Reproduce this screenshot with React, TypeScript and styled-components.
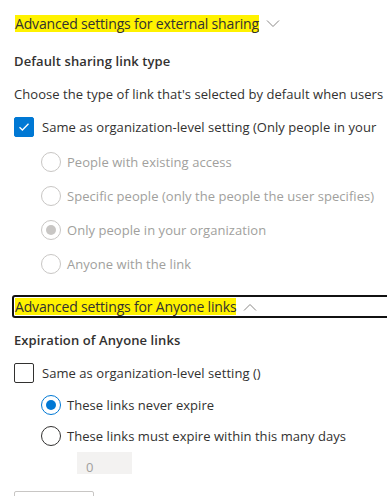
import React from "react";
import styled, { createGlobalStyle } from "styled-components";

const GlobalStyle = createGlobalStyle`
  body {
    margin: 0;
    background: #ffffff;
    font-family: "Open Sans", "Noto Sans", sans-serif;
    color: #323130;
    overflow: hidden;
  }
`;

const Page = styled.div`
  padding: 12px 0 0 14px;
  width: 387px;
  box-sizing: border-box;
`;

const SectionHeader = styled.div<{ $outlined?: boolean; $top?: number }>`
  display: flex;
  align-items: center;
  gap: 7px;
  height: 17px;
  margin-top: ${(p) => p.$top ?? 0}px;
  margin-left: -2px;
  margin-right: ${(p) => (p.$outlined ? "-20px" : "0")};
  padding: 1px 0 1px 1px;
  border: 2px solid ${(p) => (p.$outlined ? "#111" : "transparent")};
  border-radius: 3px;
`;

const Highlight = styled.span`
  background: #fff200;
  font-size: 14px;
  line-height: 17px;
  letter-spacing: -0.17px;
  color: #323130;
  white-space: nowrap;
`;

const Chevron: React.FC<{ up?: boolean }> = ({ up }) => (
  <svg width="14" height="8" viewBox="0 0 14 8">
    <path
      d={up ? "M1 7.5 L7 1.5 L13 7.5" : "M1 0.5 L7 6.5 L13 0.5"}
      fill="none"
      stroke="#8a8886"
      strokeWidth="1"
    />
  </svg>
);

const FieldLabel = styled.div<{ $top: number }>`
  margin-top: ${(p) => p.$top}px;
  font-size: 13px;
  font-weight: 600;
  line-height: 20px;
  letter-spacing: 0.1px;
`;

const Description = styled.div`
  margin-top: 13px;
  font-size: 13px;
  line-height: 20px;
  letter-spacing: 0.05px;
  white-space: nowrap;
`;

const CheckRow = styled.div<{ $top: number }>`
  display: flex;
  align-items: center;
  gap: 8px;
  margin-top: ${(p) => p.$top}px;
  height: 20px;
  font-size: 13px;
  letter-spacing: 0.05px;
  white-space: nowrap;
`;

const Box = styled.span<{ $checked?: boolean }>`
  flex: none;
  width: 20px;
  height: 20px;
  box-sizing: border-box;
  border-radius: 2px;
  border: 1px solid ${(p) => (p.$checked ? "#0078d4" : "#323130")};
  background: ${(p) => (p.$checked ? "#0078d4" : "#fff")};
  display: flex;
  align-items: center;
  justify-content: center;
`;

const RadioList = styled.div<{ $top: number; $step: number }>`
  display: flex;
  flex-direction: column;
  gap: ${(p) => p.$step - 20}px;
  margin-top: ${(p) => p.$top}px;
  padding-left: 27px;
`;

const RadioRow = styled.div<{ $disabled?: boolean }>`
  display: flex;
  align-items: center;
  gap: 6px;
  height: 20px;
  font-size: 13px;
  letter-spacing: 0.05px;
  white-space: nowrap;
  color: ${(p) => (p.$disabled ? "#a19f9d" : "#323130")};
`;

const Dot = styled.span<{ $checked?: boolean; $disabled?: boolean }>`
  flex: none;
  width: 20px;
  height: 20px;
  box-sizing: border-box;
  border-radius: 50%;
  border: 1px solid
    ${(p) => (p.$disabled ? "#c8c6c4" : p.$checked ? "#0078d4" : "#323130")};
  display: flex;
  align-items: center;
  justify-content: center;

  &::after {
    content: "";
    display: ${(p) => (p.$checked ? "block" : "none")};
    width: 10px;
    height: 10px;
    border-radius: 50%;
    background: ${(p) => (p.$disabled ? "#c8c6c4" : "#0078d4")};
  }
`;

const DaysInput = styled.div`
  margin: 6px 0 0 63px;
  width: 55px;
  height: 22px;
  box-sizing: border-box;
  background: #f3f2f1;
  color: #a19f9d;
  font-size: 13px;
  line-height: 13px;
  padding: 9px 0 0 9px;
`;

const SaveButton = styled.div`
  margin-top: 17px;
  width: 80px;
  height: 32px;
  box-sizing: border-box;
  border: 1px solid #c8c6c4;
  border-radius: 2px;
`;

const CheckMark = () => (
  <svg width="12" height="10" viewBox="0 0 12 10">
    <path d="M1.5 5.2 L4.4 8 L10.5 1.8" fill="none" stroke="#fff" strokeWidth="1.3" />
  </svg>
);

const sharingOptions = [
  { label: "People with existing access", checked: false },
  { label: "Specific people (only the people the user specifies)", checked: false },
  { label: "Only people in your organization", checked: true },
  { label: "Anyone with the link", checked: false },
];

export default function App() {
  return (
    <>
      <GlobalStyle />
      <Page>
        <SectionHeader>
          <Highlight>Advanced settings for external sharing</Highlight>
          <Chevron />
        </SectionHeader>

        <FieldLabel $top={16}>Default sharing link type</FieldLabel>
        <Description>Choose the type of link that's selected by default when users</Description>

        <CheckRow $top={13}>
          <Box $checked>
            <CheckMark />
          </Box>
          Same as organization-level setting (Only people in your
        </CheckRow>

        <RadioList $top={15} $step={34}>
          {sharingOptions.map((o) => (
            <RadioRow key={o.label} $disabled>
              <Dot $checked={o.checked} $disabled />
              {o.label}
            </RadioRow>
          ))}
        </RadioList>

        <SectionHeader $outlined $top={21}>
          <Highlight>Advanced settings for Anyone links</Highlight>
          <Chevron up />
        </SectionHeader>

        <FieldLabel $top={12}>Expiration of Anyone links</FieldLabel>

        <CheckRow $top={13}>
          <Box />
          Same as organization-level setting ()
        </CheckRow>

        <RadioList $top={12} $step={31}>
          <RadioRow>
            <Dot $checked />
            These links never expire
          </RadioRow>
          <RadioRow>
            <Dot />
            These links must expire within this many days
          </RadioRow>
        </RadioList>

        <DaysInput>0</DaysInput>

        <SaveButton />
      </Page>
    </>
  );
}
